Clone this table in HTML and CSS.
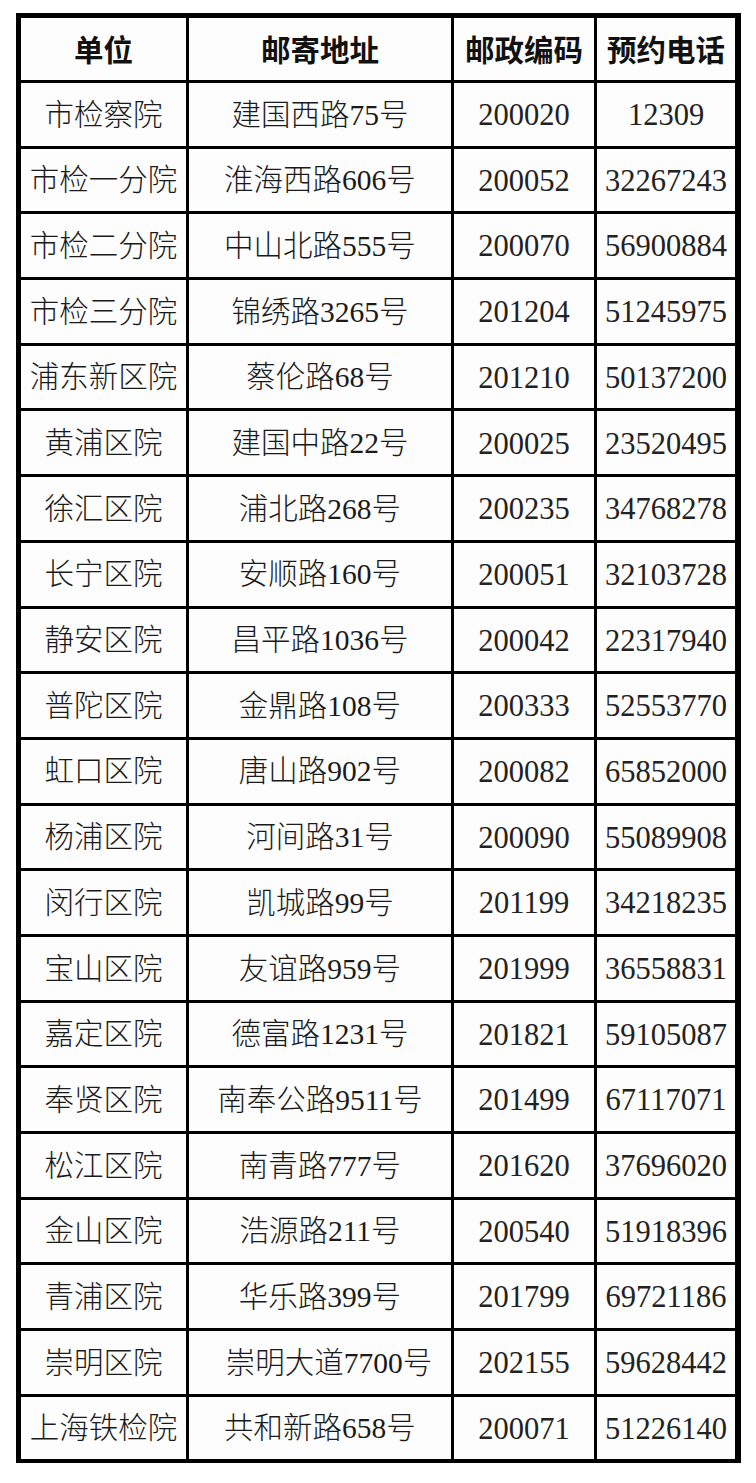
FILE: index.html
```html
<!DOCTYPE html>
<html lang="zh-CN">
<head>
<meta charset="utf-8">
<title>联系方式</title>
<link rel="stylesheet" href="styles.css">
</head>
<body>
<div class="page">
  <div class="grid">
    <div class="cell head">单位</div>
    <div class="cell head">邮寄地址</div>
    <div class="cell head">邮政编码</div>
    <div class="cell head">预约电话</div>

    <div class="cell">市检察院</div><div class="cell">建国西路75号</div><div class="cell num">200020</div><div class="cell num">12309</div>
    <div class="cell">市检一分院</div><div class="cell">淮海西路606号</div><div class="cell num">200052</div><div class="cell num">32267243</div>
    <div class="cell">市检二分院</div><div class="cell">中山北路555号</div><div class="cell num">200070</div><div class="cell num">56900884</div>
    <div class="cell">市检三分院</div><div class="cell">锦绣路3265号</div><div class="cell num">201204</div><div class="cell num">51245975</div>
    <div class="cell">浦东新区院</div><div class="cell">蔡伦路68号</div><div class="cell num">201210</div><div class="cell num">50137200</div>
    <div class="cell">黄浦区院</div><div class="cell">建国中路22号</div><div class="cell num">200025</div><div class="cell num">23520495</div>
    <div class="cell">徐汇区院</div><div class="cell">浦北路268号</div><div class="cell num">200235</div><div class="cell num">34768278</div>
    <div class="cell">长宁区院</div><div class="cell">安顺路160号</div><div class="cell num">200051</div><div class="cell num">32103728</div>
    <div class="cell">静安区院</div><div class="cell">昌平路1036号</div><div class="cell num">200042</div><div class="cell num">22317940</div>
    <div class="cell">普陀区院</div><div class="cell">金鼎路108号</div><div class="cell num">200333</div><div class="cell num">52553770</div>
    <div class="cell">虹口区院</div><div class="cell">唐山路902号</div><div class="cell num">200082</div><div class="cell num">65852000</div>
    <div class="cell">杨浦区院</div><div class="cell">河间路31号</div><div class="cell num">200090</div><div class="cell num">55089908</div>
    <div class="cell">闵行区院</div><div class="cell">凯城路99号</div><div class="cell num">201199</div><div class="cell num">34218235</div>
    <div class="cell">宝山区院</div><div class="cell">友谊路959号</div><div class="cell num">201999</div><div class="cell num">36558831</div>
    <div class="cell">嘉定区院</div><div class="cell">德富路1231号</div><div class="cell num">201821</div><div class="cell num">59105087</div>
    <div class="cell">奉贤区院</div><div class="cell">南奉公路9511号</div><div class="cell num">201499</div><div class="cell num">67117071</div>
    <div class="cell">松江区院</div><div class="cell">南青路777号</div><div class="cell num">201620</div><div class="cell num">37696020</div>
    <div class="cell">金山区院</div><div class="cell">浩源路211号</div><div class="cell num">200540</div><div class="cell num">51918396</div>
    <div class="cell">青浦区院</div><div class="cell">华乐路399号</div><div class="cell num">201799</div><div class="cell num">69721186</div>
    <div class="cell">崇明区院</div><div class="cell shift">崇明大道7700号</div><div class="cell num">202155</div><div class="cell num">59628442</div>
    <div class="cell">上海铁检院</div><div class="cell">共和新路658号</div><div class="cell num">200071</div><div class="cell num">51226140</div>
  </div>
</div>
</body>
</html>
```

FILE: styles.css
```css
html, body {
  margin: 0;
  padding: 0;
  background: #ffffff;
}

.page {
  padding: 13px 0 0 16px;
}

.grid {
  display: inline-grid;
  grid-template-columns: 165px 262px 140px 138px;
  grid-template-rows: 62px;
  grid-auto-rows: 62.7px;
  gap: 3px;
  background: #000000;
  padding: 5px 6px 4px 5px;
}

.cell {
  background: #fdfdfd;
  display: flex;
  align-items: center;
  justify-content: center;
  white-space: nowrap;
  font-family: "Liberation Serif", "Noto Sans CJK SC", serif;
  font-size: 29.5px;
  font-weight: 300;
  color: #1a1a1a;
  line-height: 1;
  padding-top: 2px;
  box-sizing: border-box;
}

.num {
  font-size: 30.5px;
  font-weight: 400;
  color: #222222;
}

.head {
  font-family: "Noto Sans CJK SC", sans-serif;
  font-weight: 700;
  font-size: 29.5px;
  color: #111111;
  padding-top: 0;
}

.shift {
  padding-left: 18px;
}
```
